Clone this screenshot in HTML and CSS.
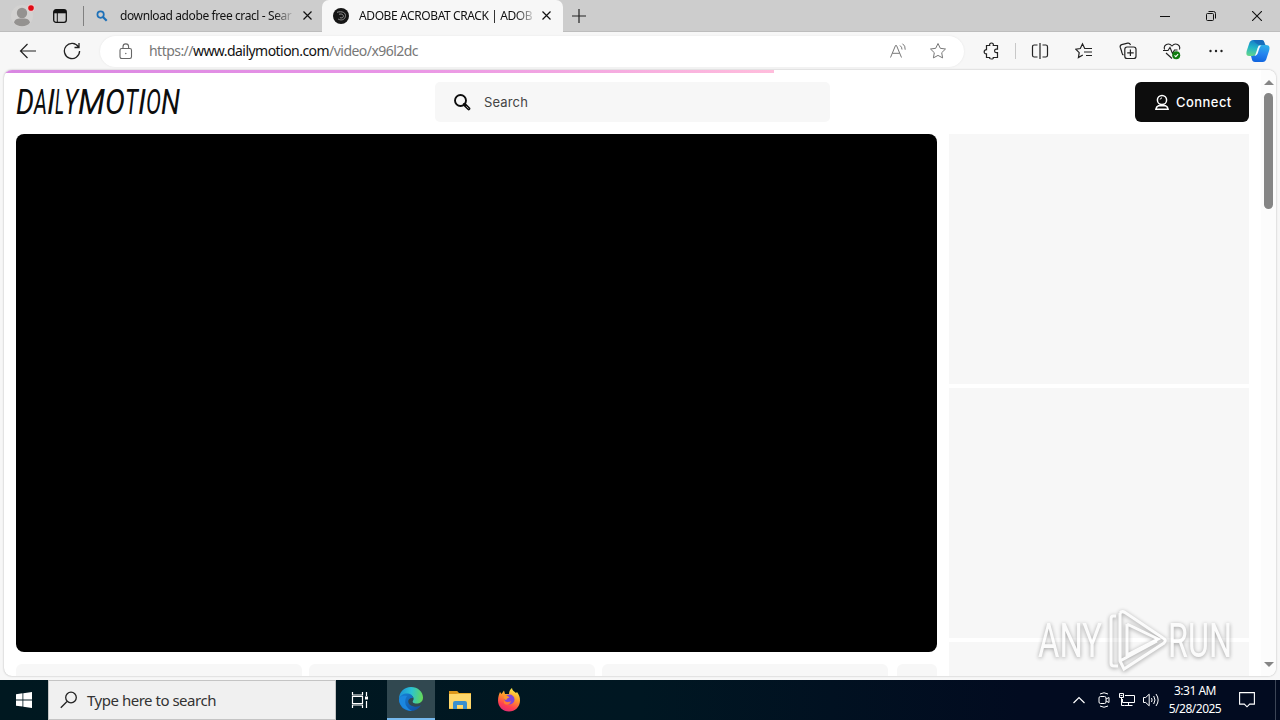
FILE: index.html
```html
<!DOCTYPE html>
<html lang="en">
<head>
  <meta charset="UTF-8">
  <meta name="viewport" content="width=device-width, initial-scale=1.0">
  <title>Dailymotion</title>
  <link rel="stylesheet" href="styles.css">
</head>
<body>
  <div class="tab-strip">
    <div class="profile">
      <svg width="28" height="32" viewBox="0 0 28 32"><circle cx="14" cy="16" r="11" fill="#d3d2d1"/><circle cx="14" cy="13" r="5.2" fill="#949290"/><path d="M6 22.5c1-4 4-4 8-4s7 0 8 4c-3 5-13 5-16 0z" fill="#949290"/><circle cx="23" cy="8" r="3.7" fill="#f0c9c9"/><circle cx="23" cy="8" r="2.8" fill="#e00b16"/></svg>
    </div>
    <svg class="workspaces" width="14" height="14" viewBox="0 0 14 14"><rect x=".7" y=".7" width="12.6" height="12.6" rx="2.3" fill="none" stroke="#111" stroke-width="1.3"/><path d="M1 1h12v3.3H1z" fill="#111"/><path d="M4.3 4v9" stroke="#111"/></svg>
    <span class="tab-divider"></span>
    <div class="tab">
      <svg width="12" height="12" viewBox="0 0 12 12" fill="none" stroke="#1d70b8"><circle cx="4.6" cy="4.6" r="3.2" stroke-width="1.7"/><path d="M7 7l3.7 3.7" stroke-width="2.2"/></svg>
      <span class="tab-title first">download adobe free cracl - Sear</span>
      <svg class="close" width="9" height="9" viewBox="0 0 9 9"><path d="M.5.5l8 8M8.500.5l-8 8" stroke="#111" stroke-width="1.2"/></svg>
    </div>
    <div class="tab active">
      <svg width="16" height="16" viewBox="0 0 16 16" fill="none"><circle cx="8" cy="8" r="8" fill="#151515"/><path d="M4 4.300c5-1.600 9.500.4 8.300 4.500-.8 3-4 4-7.100 2.300M6 6.300c3-1 5 .7 4.200 2.700-.5 1-2 1.200-3.300.6" stroke="#909090"/></svg>
      <span class="tab-title second">ADOBE ACROBAT CRACK | ADOB</span>
      <svg class="close" width="9" height="9" viewBox="0 0 9 9"><path d="M.5.5l8 8M8.500.5l-8 8" stroke="#111" stroke-width="1.2"/></svg>
    </div>
    <svg class="new-tab" width="14" height="14" viewBox="0 0 14 14"><path d="M7 0v14M0 7h14" stroke="#222" stroke-width="1.2"/></svg>
    <div class="window-buttons">
      <svg width="10" height="10" viewBox="0 0 10 10"><path d="M0 5.500h10" stroke="#111"/></svg>
      <svg width="10" height="10" viewBox="0 0 10 10" fill="none" stroke="#111"><rect x=".5" y="2.500" width="7" height="7" rx="1"/><path d="M2.500.5h5q2 0 2 2v5"/></svg>
      <svg width="10" height="10" viewBox="0 0 10 10"><path d="M0 0l10 10M10 0L0 10" stroke="#111" stroke-width="1.100"/></svg>
    </div>
  </div>

  <div class="toolbar">
    <svg class="back" width="18" height="16" viewBox="0 0 18 16" fill="none" stroke="#222" stroke-width="1.200"><path d="M17 8H1.500M8.500 1L1.500 8l7 7"/></svg>
    <svg class="reload" width="18" height="18" viewBox="0 0 18 18" fill="none" stroke="#222" stroke-width="1.300"><path d="M15.500 5A7.600 7.600 0 1 0 16.600 9M16 1v4.500h-4.500"/></svg>
    <div class="address">
      <svg class="lock" width="14" height="17" viewBox="0 0 14 17" fill="none" stroke="#666" stroke-width="1.100"><rect x="1" y="5.500" width="11.500" height="10" rx="1.700"/><path d="M4 5.500V3.700a2.800 2.800 0 0 1 5.600 0v1.800"/><circle cx="6.800" cy="10.500" r=".7" fill="#666" stroke="none"/></svg>
      <span class="url"><span>https://</span><span class="host">www.dailymotion.com</span><span>/video/x96l2dc</span></span>
      <svg class="read" width="18" height="16" viewBox="0 0 18 16" fill="none" stroke="#777"><path d="M1.500 14.500L6.500 2.500h1l5 12M3.300 10.300h7.400M11 2.500q2 1.500 2 4M13.500.7q3 2 2.700 6"/></svg>
      <svg width="18" height="18" viewBox="0 0 18 18" fill="none" stroke="#777"><path d="M9 1.500l2.300 4.800 5.200.7-3.800 3.700.9 5.200L9 13.400l-4.600 2.500.9-5.200L1.500 7l5.200-.7z"/></svg>
    </div>
    <div class="tools">
      <svg width="18" height="18" viewBox="0 0 18 18" fill="none" stroke="#222" stroke-width="1.200"><path d="M3.500 3.500h3.200C6.300 1.600 7.200 1 8.500 1s2.200.8 1.800 2.500h4.200v3.700h-1.300c-2 0-2.400 3.300 0 3.500h1.300v4.800h-4.200c.3 1-.4 1.500-1.800 1.500s-2.200-.5-1.900-1.500H3.500v-3.700C.5 12.100.3 8 3.500 7.600z"/></svg>
      <span class="tool-divider"></span>
      <svg width="18" height="18" viewBox="0 0 18 18" fill="none" stroke="#222" stroke-width="1.200"><path d="M6.500 3H3.300q-1.800 0-1.800 1.800v8.400q0 1.800 1.800 1.800h3.200M11.500 3h3.200q1.800 0 1.800 1.800v8.400q0 1.800-1.800 1.800h-3.200M9 1v16"/></svg>
      <svg width="18" height="18" viewBox="0 0 18 18" fill="none" stroke="#222" stroke-width="1.200"><path d="M10.500 6.500H9.700L7.500 1.800 5.300 6.500l-4.500.7 3.400 3.400-.8 5 4.400-2.500M10.200 6.500H17M9 10h8M11 13.500h6"/></svg>
      <svg width="18" height="18" viewBox="0 0 18 18" fill="none" stroke="#222" stroke-width="1.200"><path d="M4.500 13C3 12.500 3 11 2.500 9L1.200 5.200Q.8 3.200 2.700 2.600l6-1.400q2-.4 2.800 1.800"/><rect x="5.800" y="5" width="11.200" height="11.500" rx="2.300"/><path d="M11.400 7.500V14M8.200 10.800h6.500"/></svg>
      <svg width="18" height="18" viewBox="0 0 18 18" fill="none" stroke="#222" stroke-width="1.100"><path d="M1.600 7.500C0 3 5.500-.2 9 4c3.500-4.200 9-1 7.400 3.500M0 8.500h5l2-3 2.500 6 2-3.500h3M3 11l6 5.500"/><circle cx="13.200" cy="13.300" r="4" fill="#107c10" stroke="none"/><path d="M11.500 13.400l1.300 1.200 2.300-2.500" stroke="#fff"/></svg>
      <svg width="18" height="18" viewBox="0 0 18 18" fill="#222"><circle cx="3.500" cy="9" r="1.200"/><circle cx="9" cy="9" r="1.200"/><circle cx="14.500" cy="9" r="1.200"/></svg>
    </div>
    <svg class="copilot" width="24" height="24" viewBox="0 0 24 24">
      <defs>
        <linearGradient id="cp1" x1=".5" y1="0" x2=".3" y2="1"><stop offset="0" stop-color="#1479c9"/><stop offset=".5" stop-color="#22b5c7"/><stop offset="1" stop-color="#62d58c"/></linearGradient>
        <linearGradient id="cp2" x1=".6" y1="0" x2=".4" y2="1"><stop offset="0" stop-color="#2cafe9"/><stop offset=".5" stop-color="#2584ef"/><stop offset="1" stop-color="#1064df"/></linearGradient>
      </defs>
      <path d="M7.500 1h8c3 0 2.500 3 4 5-4 0-5 1-6 4l-1 4c-1 3-3 3-6 3H3c-3 0-3-3-2-6l2-6c1-3 2-4 4.500-4z" fill="url(#cp1)"/>
      <path d="M16 6h4c4 0 4 3 3 6l-2 6c-1 4-2 5-5 5H9c-3 0-3-3-4-6 4 0 5.500-1 6.500-4l1-4c.7-2 1.500-3 3.500-3z" fill="url(#cp2)"/>
      <path d="M13 6.500h2.500c-2 1-2.500 4-3.500 7-.5 1.800-1.500 3-3.500 3.500 1-1 1.500-3 2.500-6 .6-2 1-3.500 2-4.500z" fill="#f5fbff"/>
      <path d="M7.500 1h8c3 0 2.500 3 4 5H13c-2-1-4-2-5.500-5z" fill="#1565b7" opacity=".75"/>
    </svg>
  </div>

  <div class="page">
    <div class="progress"></div>
    <div class="content">
      <header class="site-header">
        <svg class="logo" width="168" height="40" viewBox="0 0 168 40">
          <text y="32"><tspan x="0" textLength="18" lengthAdjust="spacingAndGlyphs">D</tspan><tspan x="18" textLength="13" lengthAdjust="spacingAndGlyphs">A</tspan><tspan x="31" textLength="8" lengthAdjust="spacingAndGlyphs">I</tspan><tspan x="39" textLength="9" lengthAdjust="spacingAndGlyphs">L</tspan><tspan x="48" textLength="14" lengthAdjust="spacingAndGlyphs">Y</tspan><tspan x="62" textLength="27" lengthAdjust="spacingAndGlyphs">M</tspan><tspan x="89" textLength="20" lengthAdjust="spacingAndGlyphs">O</tspan><tspan x="109" textLength="13" lengthAdjust="spacingAndGlyphs">T</tspan><tspan x="122" textLength="8" lengthAdjust="spacingAndGlyphs">I</tspan><tspan x="130" textLength="15" lengthAdjust="spacingAndGlyphs">O</tspan><tspan x="145" textLength="19" lengthAdjust="spacingAndGlyphs">N</tspan></text>
        </svg>
        <div class="search-box">
          <svg width="18" height="18" viewBox="0 0 18 18" fill="none" stroke="#0d0d0d"><circle cx="7.500" cy="7.500" r="5.500" stroke-width="1.900"/><path d="M11.500 11.500l4.200 4.200" stroke-width="3.300" stroke-linecap="round"/><path d="M13.300 13.300l2.300 2.300" stroke="#f7f7f7" stroke-width=".7"/></svg>
          <span>Search</span>
        </div>
        <button class="connect">
          <svg width="16" height="17" viewBox="0 0 16 17" fill="none" stroke="#fff" stroke-width="1.500"><circle cx="8" cy="6" r="4.600"/><path d="M6.200 5.500q.3-1.500 1.800-1.700" stroke-width="1"/><path d="M4.500 11.800h7q2.200.8 2.600 3.400H1.900q.4-2.600 2.600-3.400z"/></svg>
          <span>Connect</span>
        </button>
      </header>
      <main class="columns">
        <div class="left">
          <div class="player"></div>
          <div class="cards">
            <div class="card"></div>
            <div class="card"></div>
            <div class="card"></div>
            <div class="card small"></div>
          </div>
        </div>
        <aside class="right">
          <div class="block"></div>
          <div class="block"></div>
          <div class="block"></div>
        </aside>
      </main>
    </div>
    <div class="scrollbar">
      <span class="arrow up"></span>
      <span class="thumb"></span>
      <span class="arrow down"></span>
    </div>
  </div>

  <svg class="watermark" width="230" height="74" viewBox="0 0 230 74">
    <text x="8" y="51" textLength="64" lengthAdjust="spacingAndGlyphs">ANY</text>
    <path d="M86 10h-3q-2 0-2 3v44q0 3 3 3h4M90 7v48l4 8 40-26q3-3-1-5L95 6.500q-3-2-5 .5M97 18v31l31-16-31-15M90 55l37-20"/>
    <text x="138" y="51" textLength="64" lengthAdjust="spacingAndGlyphs">RUN</text>
  </svg>

  <footer class="taskbar">
    <div class="start"><svg width="16" height="16" viewBox="0 0 16 16" fill="#fff"><path d="M0 2.200L6.500 1.300v6.200H0zM7.300 1.200L16 0v7.500H7.300zM0 8.400h6.500v6.200L0 13.700zM7.300 8.400H16V16l-8.700-1.200z"/></svg></div>
    <div class="task-search">
      <svg width="18" height="18" viewBox="0 0 18 18" fill="none" stroke="#222" stroke-width="1.300"><circle cx="11" cy="6.500" r="5.300"/><path d="M7 10.500L.8 16.700"/></svg>
      <span>Type here to search</span>
    </div>
    <div class="task"><svg width="18" height="18" viewBox="0 0 18 18" fill="none" stroke="#fff" stroke-width="1.200"><path d="M1.500 1v3h10V1M1.500 17v-3h10v3M1.500 5.500h10v7h-10zM15.500 1v4M15.500 10v7"/><path d="M14 5.500h3v3h-3z" fill="#fff" stroke="none"/></svg></div>
    <div class="task open">
      <svg width="26" height="26" viewBox="0 0 26 26">
        <defs>
          <linearGradient id="edge1" x1="0" y1=".4" x2="1" y2=".5"><stop offset="0" stop-color="#1b91d8"/><stop offset=".5" stop-color="#2bc3d2"/><stop offset="1" stop-color="#65d957"/></linearGradient>
          <linearGradient id="edge2" x1="0" y1="0" x2="1" y2="1"><stop offset="0" stop-color="#1683d8"/><stop offset="1" stop-color="#114a9c"/></linearGradient>
        </defs>
        <path d="M1 13C1 6 6 1 13 1s12 5 12 10.500c0 4-3 6-6.500 6-3 0-4.500-1.200-3.500-2.700 1.800-2.500-.2-5.800-4-5.800C6 9 2 11 1 13z" fill="url(#edge1)"/>
        <path d="M1 13c1-4 5-6 9-5.500 3 .3 5 2.500 5 4.500-6-1-7 7 1 8.500 3 .6 5-.5 7-1.300C20.500 23 17 25 13 25 6 25 1 20 1 13z" fill="url(#edge2)"/>
        <path d="M9 10c-4 6-1 12 5 15-7 0-13-5-13-12 1-3 5-4 8-3z" fill="#1b87df"/>
      </svg>
    </div>
    <div class="task"><svg width="22" height="20" viewBox="0 0 22 20"><path d="M0 1h8l2 2h12v16H0z" fill="#e9ab28"/><path d="M0 4h22v14.500H0z" fill="#fed76b"/><path d="M4 19v-6q0-2 2-2h10q2 0 2 2v6h-4v-4H8v4z" fill="#3a8fce"/><path d="M0 1h8l1 2-2 1H0z" fill="#dc971b"/></svg></div>
    <div class="task">
      <svg width="24" height="24" viewBox="0 0 24 24">
        <defs><linearGradient id="fox" x1=".7" y1="0" x2=".3" y2="1"><stop offset="0" stop-color="#fff04a"/><stop offset=".4" stop-color="#ff9b29"/><stop offset=".75" stop-color="#ff4050"/><stop offset="1" stop-color="#e02b77"/></linearGradient></defs>
        <path d="M3 4l1.500 2L7 2.500 8 6l4 0c0-3 1.500-5 3-6 0 2 2 3.500 4 5l1-1c2 3 3 5 3 8.500C23 19 18 23.500 12 23.500S1 19 1 12.500C1 9 2 6 3 4z" fill="url(#fox)"/>
        <circle cx="12.500" cy="11.500" r="5" fill="#8146d8"/><path d="M7 8c2-1 4 0 5.500 1.500-2 .5-3 1-3 2.500-2 0-3-1.500-2.500-4z" fill="#ff992a"/><path d="M7 12c2 3 6 2 7 1-.5 3-3 4-5 3.500S6.500 14 7 12z" fill="#ff7c32"/>
      </svg>
    </div>
    <div class="tray">
      <svg width="12" height="8" viewBox="0 0 12 8" fill="none" stroke="#fff" stroke-width="1.200"><path d="M.5 7L6 1.500 11.500 7"/></svg>
      <svg class="meet" width="14" height="16" viewBox="0 0 14 16" fill="none" stroke="#fff"><rect x="2" y="4.500" width="7" height="7" rx="1.500"/><path d="M9 7l3-1.500v5L9 9M3 2q4-2.500 8 0M3 14q4 2.500 8 0"/></svg>
      <svg class="net" width="16" height="14" viewBox="0 0 16 14" fill="none" stroke="#fff"><path d="M6 2.500h9.500v7H3.500V6M9.500 9.500v3M5.500 12.500h8M.5.500h4v4h-4zM2.500 4.500v8h3M1.500 2.500h2"/></svg>
      <svg class="sound" width="17" height="14" viewBox="0 0 17 14" fill="none" stroke="#fff"><path d="M.5 4.500h2.200l3.500-3.300v11.600L2.700 9.500H.5zM8.500 5q1.200 2 0 4M10.700 3q2.600 4 0 8M13 1q4.300 6 0 12"/></svg>
      <div class="clock"><span>3:31 AM</span><span class="date">5/28/2025</span></div>
      <svg class="note" width="16" height="16" viewBox="0 0 16 16" fill="none" stroke="#fff" stroke-width="1.100"><path d="M.6.600h14.800v11.500h-4.700L8 14.800l-2.700-2.700H.6z"/></svg>
      <span class="show-desktop"></span>
    </div>
  </footer>
</body>
</html>
```
FILE: styles.css
```css
* {
  box-sizing: border-box;
}

html, body {
  margin: 0;
  padding: 0;
  height: 100%;
  overflow: hidden;
}

body {
  display: flex;
  flex-direction: column;
  width: 1280px;
  height: 720px;
  background: #f7f7f7;
  font-family: "Noto Sans", "Open Sans", sans-serif;
  color: #111;
}

svg {
  display: block;
  flex: none;
}

/* Browser tabs */
.tab-strip {
  display: flex;
  align-items: center;
  height: 32px;
  background: #cdcdcd;
  border-bottom: 1px solid #bdbdbd;
}

.profile {
  width: 53px;
  padding-left: 8px;
}

.tab-divider {
  width: 1px;
  height: 20px;
  margin-left: 16px;
  background: #808080;
}

.tab {
  display: flex;
  align-items: center;
  width: 238px;
  height: 32px;
  padding: 0 10px 0 12px;
}

.tab.active {
  width: 241px;
  padding: 0 12px 0 11px;
  background: #f7f7f7;
  border-radius: 7px 7px 0 0;
}

.tab-title {
  margin-left: 12px;
  font-size: 12px;
  line-height: 18px;
  white-space: nowrap;
  -webkit-mask-image: linear-gradient(90deg, #000 88%, transparent);
  mask-image: linear-gradient(90deg, #000 88%, transparent);
}

.tab-title.first {
  width: 175px;
  letter-spacing: -0.4px;
}

.tab-title.second {
  width: 178px;
  margin-left: 10px;
  letter-spacing: -0.4px;
}

.close {
  margin-left: auto;
}

.new-tab {
  margin-left: 9px;
}

.window-buttons {
  display: flex;
  gap: 36px;
  margin-left: auto;
  margin-right: 18px;
}

/* Address bar and tools */
.toolbar {
  display: flex;
  align-items: center;
  height: 38px;
  padding: 0 10px 0 19px;
  background: #f7f7f7;
}

.reload {
  margin-left: 26px;
}

.address {
  display: flex;
  align-items: center;
  width: 864px;
  height: 31px;
  margin-left: 19px;
  padding: 0 17px 0 19px;
  background: #fff;
  border-radius: 16px;
  box-shadow: 0 0 2px #e3e3e3;
}

.url {
  margin-left: 16px;
  font-size: 14px;
  line-height: 20px;
  letter-spacing: -0.54px;
  color: #777;
}

.host {
  color: #111;
}

.read {
  margin-left: auto;
  margin-right: 22px;
}

.tools {
  display: flex;
  align-items: center;
  gap: 26px;
  margin-left: 19px;
}

.tool-divider {
  width: 1px;
  height: 16px;
  margin: 0 -11px 0 -12px;
  background: #c8c8c8;
}

.copilot {
  margin-left: auto;
}

/* Web page */
.page {
  position: relative;
  display: flex;
  width: 1272px;
  height: 606px;
  margin: 0 4px;
  background: #fff;
  border-radius: 8px;
  overflow: hidden;
  box-shadow: 0 0 2px #aaa;
}

.progress {
  position: absolute;
  left: 0;
  top: 0;
  width: 770px;
  height: 3px;
  background: linear-gradient(90deg, #d987e2, #e894e6 50%, #ffbddc);
}

.content {
  width: 1257px;
  padding: 12px 12px 0;
}

.site-header {
  display: flex;
  height: 40px;
}

.logo {
  overflow: visible;
}

.logo text {
  font-family: "Roboto", sans-serif;
  font-size: 35px;
  font-style: italic;
  fill: #0d0d0d;
}

.search-box {
  display: flex;
  align-items: center;
  gap: 13px;
  width: 395px;
  height: 40px;
  margin-left: 251px;
  padding-left: 18px;
  background: #f7f7f7;
  border-radius: 5px;
  font: 13px "Inter", sans-serif;
  letter-spacing: 0.15px;
  color: #444;
}

.search-box span,
.connect span {
  padding-bottom: 1px;
}

.connect {
  display: flex;
  align-items: center;
  gap: 6px;
  width: 114px;
  height: 40px;
  margin-left: auto;
  padding: 0 0 0 19px;
  background: #0d0d0d;
  border: none;
  border-radius: 6px;
  font: 500 13px "Inter", sans-serif;
  letter-spacing: 0.45px;
  color: #fff;
}

.columns {
  display: flex;
  gap: 12px;
  margin-top: 12px;
}

.player {
  width: 921px;
  height: 518px;
  background: #000;
  border-radius: 8px;
}

.cards {
  display: flex;
  gap: 7px;
  margin-top: 12px;
}

.card {
  width: 286px;
  height: 80px;
  background: #f7f7f7;
  border-radius: 6px;
}

.card.small {
  width: 40px;
  margin-left: 2px;
}

.right {
  display: flex;
  flex-direction: column;
  gap: 4px;
}

.block {
  width: 300px;
  height: 250px;
  background: #f7f7f7;
}

.scrollbar {
  display: flex;
  flex-direction: column;
  align-items: center;
  width: 15px;
  padding: 10px 0 9px;
  background: #fcfcfc;
}

.arrow {
  border: 5px solid transparent;
}

.arrow.up {
  border-top: 0;
  border-bottom-color: #858585;
}

.arrow.down {
  margin-top: auto;
  border-bottom: 0;
  border-top-color: #858585;
}

.thumb {
  width: 9px;
  height: 116px;
  margin-top: 8px;
  background: #858585;
  border-radius: 5px;
}

.watermark {
  position: absolute;
  left: 1030px;
  top: 606px;
  filter: drop-shadow(0 1px 2px rgba(0, 0, 0, 0.6));
  opacity: 0.6;
}

.watermark text {
  font: 48px "Roboto", sans-serif;
  fill: #fff;
}

.watermark path {
  fill: none;
  stroke: #fff;
  stroke-width: 3;
}

/* Windows taskbar */
.taskbar {
  display: flex;
  width: 1280px;
  height: 40px;
  margin-top: 4px;
  background: linear-gradient(90deg, #001820, #001722 50%, #020b20 80%);
}

.start {
  display: flex;
  align-items: center;
  justify-content: center;
  width: 48px;
}

.task-search {
  display: flex;
  align-items: center;
  width: 288px;
  padding-left: 11px;
  background: #f0f0f0;
  border: 1px solid #c4c4c4;
  font-size: 15px;
  letter-spacing: -0.48px;
  color: #333;
}

.task-search span {
  margin-left: 9px;
}

.task {
  display: flex;
  align-items: center;
  justify-content: center;
  width: 49px;
}

.task:nth-child(3) {
  width: 51px;
  padding-right: 3px;
}

.task.open {
  width: 48px;
  background: #314850;
  border-bottom: 2px solid #76b9ed;
}

.tray {
  display: flex;
  align-items: center;
  margin-left: auto;
}

.meet {
  margin-left: 12px;
}

.net {
  margin-left: 8px;
}

.sound {
  margin-left: 8px;
}

.clock {
  display: flex;
  flex-direction: column;
  align-items: center;
  width: 54px;
  margin-left: 8px;
  font-size: 12px;
  line-height: 18px;
  letter-spacing: -0.5px;
  color: #fff;
}

.note {
  margin-left: 17px;
}

.show-desktop {
  width: 1px;
  height: 40px;
  margin: 0 4px 0 20px;
  background: #3c4556;
}
```
